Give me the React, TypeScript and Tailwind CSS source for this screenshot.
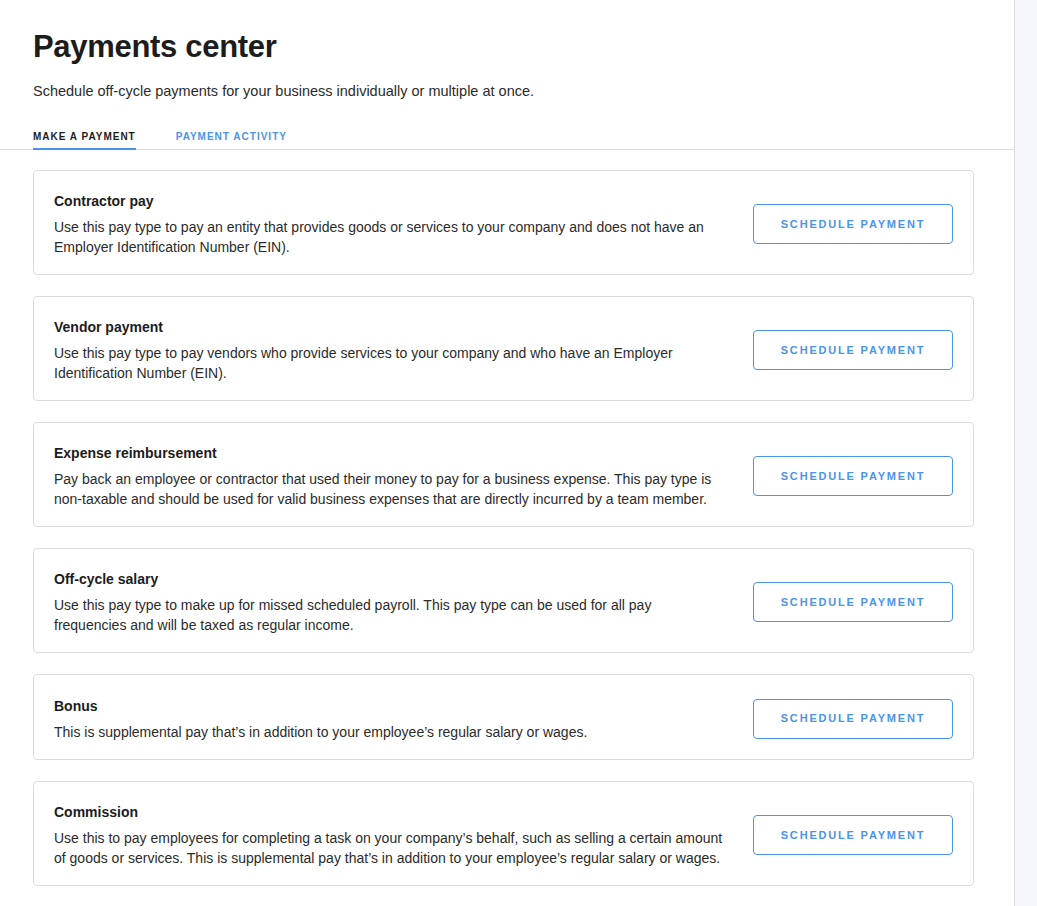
import React from "react";

const payTypes = [
  {
    title: "Contractor pay",
    description:
      "Use this pay type to pay an entity that provides goods or services to your company and does not have an Employer Identification Number (EIN).",
  },
  {
    title: "Vendor payment",
    description:
      "Use this pay type to pay vendors who provide services to your company and who have an Employer Identification Number (EIN).",
  },
  {
    title: "Expense reimbursement",
    description:
      "Pay back an employee or contractor that used their money to pay for a business expense. This pay type is non-taxable and should be used for valid business expenses that are directly incurred by a team member.",
  },
  {
    title: "Off-cycle salary",
    description:
      "Use this pay type to make up for missed scheduled payroll. This pay type can be used for all pay frequencies and will be taxed as regular income.",
  },
  {
    title: "Bonus",
    description:
      "This is supplemental pay that\u2019s in addition to your employee\u2019s regular salary or wages.",
  },
  {
    title: "Commission",
    description:
      "Use this to pay employees for completing a task on your company\u2019s behalf, such as selling a certain amount of goods or services. This is supplemental pay that\u2019s in addition to your employee\u2019s regular salary or wages.",
  },
];

const PayTypeCard = ({ title, description }: { title: string; description: string }) => (
  <div className="flex items-center justify-between border border-[#dcdcdc] rounded-[4px] bg-white pl-5 pr-5 pt-5 pb-[17px] min-h-[86px]">
    <div className="flex flex-col gap-[6px] w-[671px]">
      <span className="text-[14px] leading-5 font-bold text-[#1c1c1c]">{title}</span>
      <p className="text-[14px] leading-5 text-[#2b2b2b]">{description}</p>
    </div>
    <button className="w-[200px] h-[40px] border border-[#4a94ec] rounded-[4px] text-[11px] font-bold tracking-[0.165em] text-[#4a94ec] bg-white">
      SCHEDULE PAYMENT
    </button>
  </div>
);

export default function App() {
  return (
    <div className="flex w-[1037px] h-[906px] overflow-hidden bg-white font-['Liberation_Sans',Arial,sans-serif]">
      <main className="w-[1014px] shrink-0">
        <div className="px-[33px] pt-[29px]">
          <h1 className="text-[31px] leading-9 font-bold text-[#1c1c1c] tracking-[-0.01em]">Payments center</h1>
          <p className="mt-4 text-[14.5px] leading-5 text-[#2b2b2b]">
            Schedule off-cycle payments for your business individually or multiple at once.
          </p>
          <div className="mt-[28px] flex gap-10">
            <div className="relative z-10 pb-[3px] border-b-2 border-[#4a94ec]">
              <span className="block text-[10px] leading-4 font-bold tracking-[0.1em] text-[#1c1c1c]">MAKE A PAYMENT</span>
            </div>
            <div className="pb-[3px]">
              <span className="block text-[10px] leading-4 font-bold tracking-[0.1em] text-[#4a94ec]">PAYMENT ACTIVITY</span>
            </div>
          </div>
        </div>
        <div className="border-t border-[#dcdcdc] -mt-px" />
        <div className="flex flex-col gap-[21px] pl-[33px] pr-[40px] pt-5">
          {payTypes.map((p) => (
            <PayTypeCard key={p.title} {...p} />
          ))}
        </div>
      </main>
      <aside className="flex-1 border-l border-[#dcdce0] bg-[#f6f7fb]" />
    </div>
  );
}
